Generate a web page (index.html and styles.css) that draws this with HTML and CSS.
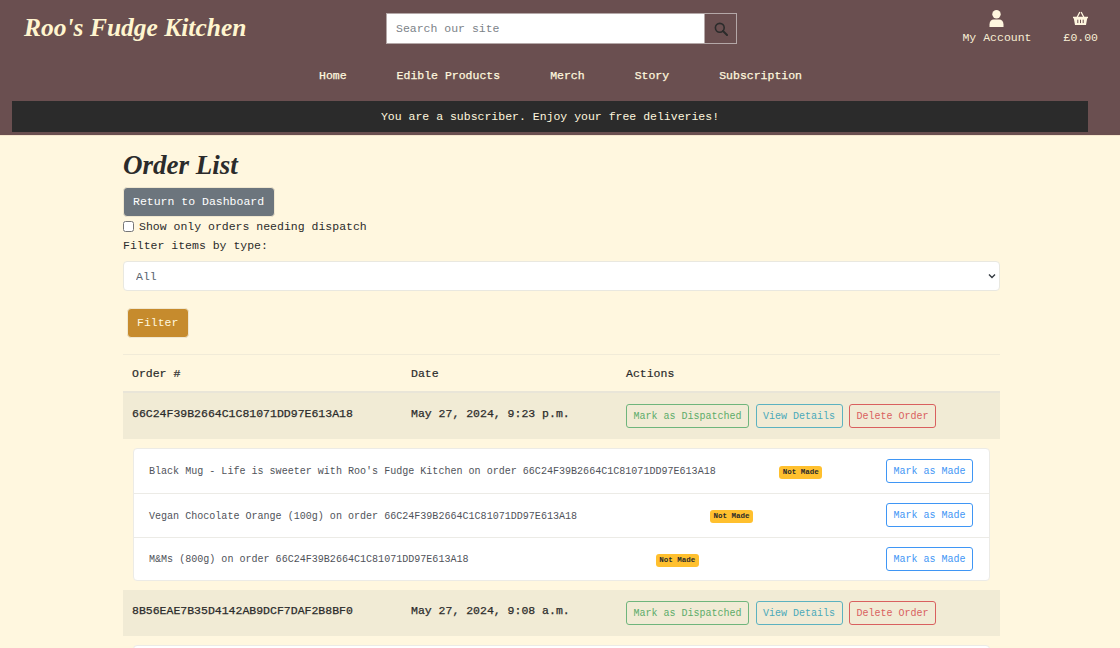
FILE: index.html
```html
<!DOCTYPE html>
<html lang="en">
<head>
    <meta charset="UTF-8">
    <title>Order List - Roo's Fudge Kitchen</title>
    <link rel="stylesheet" href="styles.css">
</head>
<body>
    <header class="site-header">
        <div class="top-row">
            <a class="logo" href="#">Roo's Fudge Kitchen</a>
            <form class="search">
                <input class="search-input" type="text" placeholder="Search our site">
                <button class="search-btn" type="button" aria-label="Search">
                    <svg width="14" height="14" viewBox="0 0 14 14"><circle cx="5.8" cy="5.8" r="4.4" fill="none" stroke="#2b2b2b" stroke-width="1.6"/><path d="M9 9l4 4" stroke="#2b2b2b" stroke-width="2" stroke-linecap="round"/></svg>
                </button>
            </form>
            <div class="account-links">
                <a class="account-link" href="#">
                    <svg width="15" height="17" viewBox="0 0 15 17"><circle cx="7.5" cy="4.3" r="4.2" fill="#fff7df"/><path d="M0.5 17v-2.6c0-3 2-4.9 4.2-4.9h5.6c2.2 0 4.2 1.9 4.2 4.9V17z" fill="#fff7df"/></svg>
                    <span>My Account</span>
                </a>
                <a class="account-link" href="#">
                    <svg width="15" height="14" viewBox="0 0 15 14"><path d="M4 6l2.6-5M11 6L8.4 1" stroke="#fff7df" stroke-width="1.3" stroke-linecap="round"/><path d="M0 5.2h15v1.6h-.8L13 13.4H2L.8 6.8H0z" fill="#fff7df"/><path d="M4.8 8.2v3.4M7.5 8.2v3.4M10.2 8.2v3.4" stroke="#6a4f50" stroke-width="1"/></svg>
                    <span>£0.00</span>
                </a>
            </div>
        </div>
        <nav class="main-nav">
            <a href="#">Home</a>
            <a href="#">Edible Products</a>
            <a href="#">Merch</a>
            <a href="#">Story</a>
            <a href="#">Subscription</a>
        </nav>
        <div class="notice">You are a subscriber. Enjoy your free deliveries!</div>
    </header>

    <main class="content">
        <h1 class="page-title">Order List</h1>
        <a class="btn btn-grey" href="#">Return to Dashboard</a>
        <label class="check-row"><input type="checkbox"> Show only orders needing dispatch</label>
        <label class="filter-label" for="typeFilter">Filter items by type:</label>
        <div class="select-wrap">
            <select class="type-select" id="typeFilter">
                <option>All</option>
            </select>
            <svg class="select-arrow" width="8" height="6" viewBox="0 0 8 6"><path d="M1 1.5l3 3 3-3" fill="none" stroke="#343a40" stroke-width="1.4"/></svg>
        </div>
        <button class="btn btn-filter" type="button">Filter</button>

        <table class="orders">
            <thead>
                <tr>
                    <th class="col-order">Order #</th>
                    <th class="col-date">Date</th>
                    <th>Actions</th>
                </tr>
            </thead>
            <tbody>
                <tr class="order-row">
                    <td>66C24F39B2664C1C81071DD97E613A18</td>
                    <td>May 27, 2024, 9:23 p.m.</td>
                    <td>
                        <div class="actions">
                            <a class="btn-small green" href="#">Mark as Dispatched</a>
                            <a class="btn-small teal" href="#">View Details</a>
                            <a class="btn-small red" href="#">Delete Order</a>
                        </div>
                    </td>
                </tr>
                <tr class="items-row">
                    <td colspan="3">
                        <ul class="items">
                            <li>
                                <span class="item-name">Black Mug - Life is sweeter with Roo's Fudge Kitchen on order 66C24F39B2664C1C81071DD97E613A18</span>
                                <span class="badge">Not Made</span>
                                <a class="btn-small blue" href="#">Mark as Made</a>
                            </li>
                            <li>
                                <span class="item-name">Vegan Chocolate Orange (100g) on order 66C24F39B2664C1C81071DD97E613A18</span>
                                <span class="badge">Not Made</span>
                                <a class="btn-small blue" href="#">Mark as Made</a>
                            </li>
                            <li>
                                <span class="item-name">M&amp;Ms (800g) on order 66C24F39B2664C1C81071DD97E613A18</span>
                                <span class="badge">Not Made</span>
                                <a class="btn-small blue" href="#">Mark as Made</a>
                            </li>
                        </ul>
                    </td>
                </tr>
                <tr class="order-row">
                    <td>8B56EAE7B35D4142AB9DCF7DAF2B8BF0</td>
                    <td>May 27, 2024, 9:08 a.m.</td>
                    <td>
                        <div class="actions">
                            <a class="btn-small green" href="#">Mark as Dispatched</a>
                            <a class="btn-small teal" href="#">View Details</a>
                            <a class="btn-small red" href="#">Delete Order</a>
                        </div>
                    </td>
                </tr>
                <tr class="items-row">
                    <td colspan="3">
                        <ul class="items">
                            <li></li>
                        </ul>
                    </td>
                </tr>
            </tbody>
        </table>
    </main>
</body>
</html>
```

FILE: styles.css
```css
* {
    box-sizing: border-box;
}

html, body {
    height: 648px;
    overflow: hidden;
}

body {
    margin: 0;
    background-color: #fff7df;
    color: #2b2b2b;
    font-family: 'Liberation Mono', monospace;
    font-size: 11.5px;
}

a {
    text-decoration: none;
}

/* header */
.site-header {
    background-color: #6a4f50;
    height: 136px;
    padding: 0 32px 0 12px;
    border-bottom: 1px solid #f5e6cd;
    width: 1120px;
}

.top-row {
    display: grid;
    grid-template-columns: 362px 351px 1fr;
    height: 57px;
    padding-left: 12px;
}

.logo {
    font-family: 'Liberation Serif', serif;
    font-style: italic;
    font-weight: bold;
    font-size: 25.5px;
    line-height: 56px;
    color: #fff5cf;
    white-space: nowrap;
}

.search {
    display: flex;
    height: 31px;
    margin-top: 13px;
}

.search-input {
    flex: 1;
    min-width: 0;
    border: 1px solid #b4a8a8;
    border-right: none;
    padding: 0 9px;
    font-family: inherit;
    font-size: 11.5px;
    outline: none;
}

.search-input::placeholder {
    color: #7c8288;
}

.search-btn {
    width: 33px;
    border: 1px solid #b4a8a8;
    background-color: #6a4f50;
    padding: 0;
    display: flex;
    align-items: center;
    justify-content: center;
}

.account-links {
    display: flex;
    justify-content: flex-end;
    gap: 32px;
    margin-right: -10px;
    padding-top: 10px;
}

.account-link {
    display: flex;
    flex-direction: column;
    align-items: center;
    height: 36px;
    color: #f7eed4;
    line-height: 14px;
}

.account-link svg {
    height: 17px;
    margin-bottom: 4px;
}

.main-nav {
    display: flex;
    justify-content: center;
    gap: 50px;
    height: 44px;
    padding: 12px 0 0 21px;
}

.main-nav a {
    color: #fff7df;
    -webkit-text-stroke: 0.25px #fff7df;
    line-height: 14px;
}

.notice {
    background-color: #2b2b2b;
    color: #fff7df;
    width: 1076px;
    height: 31px;
    line-height: 31px;
    text-align: center;
}

/* page content */
.content {
    padding-left: 123px;
    width: 1000px;
}

.page-title {
    margin: 14px 0 7px;
    height: 30px;
    font-family: 'Liberation Serif', serif;
    font-style: italic;
    font-weight: bold;
    font-size: 27px;
    line-height: 30px;
    color: #2b2b2b;
}

.btn {
    display: block;
    height: 30px;
    line-height: 28px;
    padding: 0 10px 0 9px;
    border: 1px solid #f0e7cf;
    border-radius: 4px;
    font-family: inherit;
    font-size: 11.5px;
    width: fit-content;
}

.btn-grey {
    background-color: #6c757d;
    color: #fff;
}

.btn-filter {
    background-color: #c68b2d;
    color: #fff7df;
    margin: 17px 0 16px 4px;
}

.check-row {
    display: flex;
    align-items: center;
    height: 19px;
    gap: 5px;
}

.check-row input {
    margin: 0;
    width: 11px;
    height: 11px;
}

.filter-label {
    display: block;
    height: 25px;
    line-height: 19px;
}

.select-wrap {
    position: relative;
}

.type-select {
    display: block;
    width: 100%;
    height: 30px;
    padding: 0 12px;
    appearance: none;
    background-color: #fff;
    border: 1px solid #e9e8e0;
    border-radius: 4px;
    color: #5a6570;
    font-family: inherit;
    font-size: 11.5px;
}

.select-arrow {
    position: absolute;
    right: 4px;
    top: 12px;
}

/* orders table */
.orders {
    width: 100%;
    table-layout: fixed;
    border-collapse: collapse;
}

.orders th {
    height: 37px;
    padding: 2px 9px 0;
    text-align: left;
    font-weight: normal;
    -webkit-text-stroke: 0.2px #2b2b2b;
    border-top: 1px solid #f1ebd8;
    border-bottom: 2px solid #e9e5d8;
}

.col-order {
    width: 279px;
}

.col-date {
    width: 215px;
}

.order-row td {
    background-color: #f1ebd5;
    height: 46px;
    padding: 13px 9px 11px;
    vertical-align: top;
    -webkit-text-stroke: 0.25px #2b2b2b;
    line-height: 16px;
}

.order-row td:last-child {
    padding: 11px 9px;
    -webkit-text-stroke: 0;
}

.actions {
    display: flex;
    gap: 6.5px;
}

.btn-small {
    display: block;
    height: 24px;
    padding: 0 6.5px;
    border: 1px solid;
    border-radius: 3px;
    font-size: 10px;
    line-height: 24px;
    white-space: nowrap;
}

.green {
    color: #5cab6a;
    border-color: #6fb57c;
}

.teal {
    color: #4aa9b9;
    border-color: #5cb2c0;
}

.red {
    color: #d9605f;
    border-color: #d9605f;
}

.blue {
    color: #3f96f5;
    border-color: #3f96f5;
}

.items-row td {
    padding: 9px 10px;
}

.items {
    list-style: none;
    margin: 0;
    padding: 0;
    background-color: #fff;
    border: 1px solid #ecebe6;
    border-radius: 4px;
}

.items li {
    display: flex;
    justify-content: space-between;
    align-items: center;
    height: 44px;
    padding: 0 16px 0 15px;
    font-size: 10px;
    color: #50535a;
    border-top: 1px solid #ecebe6;
}

.items li:first-child {
    border-top: none;
}

.items li:last-child {
    height: 43px;
}

.item-name {
    font-size: 10.05px;
    margin-top: 2px;
}

.badge {
    background-color: #ffc02e;
    color: #2b2b2b;
    font-size: 7.5px;
    font-weight: bold;
    line-height: 13px;
    margin-top: 3px;
    padding: 0 3.5px;
    border-radius: 3px;
}
```
